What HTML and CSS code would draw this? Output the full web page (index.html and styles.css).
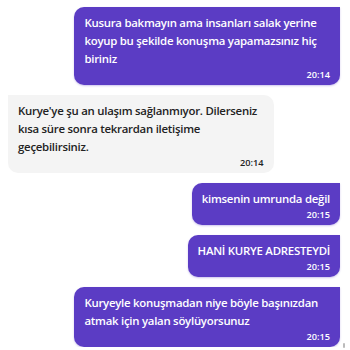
FILE: index.html
```html
<!DOCTYPE html>
<html lang="tr">
<head>
    <meta charset="UTF-8">
    <meta name="viewport" content="width=device-width, initial-scale=1.0">
    <title>Sohbet</title>
    <link rel="stylesheet" href="styles.css">
</head>
<body>

    <!-- mesaj listesi -->
    <div class="chat-box">
        <div class="chat-message sent">
            <div class="text">Kusura bakmayın ama insanları salak yerine koyup bu şekilde konuşma yapamazsınız hiç biriniz</div>
            <div class="time">20:14</div>
        </div>

        <div class="chat-message received">
            <div class="text">Kurye'ye şu an ulaşım sağlanmıyor. Dilerseniz kısa süre sonra tekrardan iletişime geçebilirsiniz.</div>
            <div class="time">20:14</div>
        </div>

        <div class="chat-message sent">
            <div class="text">kimsenin umrunda değil</div>
            <div class="time">20:15</div>
        </div>

        <div class="chat-message sent">
            <div class="text">HANİ KURYE ADRESTEYDİ</div>
            <div class="time">20:15</div>
        </div>

        <div class="chat-message sent">
            <div class="text">Kuryeyle konuşmadan niye böyle başınızdan atmak için yalan söylüyorsunuz</div>
            <div class="time">20:15</div>
        </div>
    </div>

    <div class="scroll-mark"></div>

</body>
</html>
```

FILE: styles.css
```css
body {
    font-family: "Open Sans", "Noto Sans", sans-serif;
    background: #fff;
    margin: 0;
    overflow: hidden;
}

.chat-box {
    display: flex;
    flex-direction: column;
    padding: 7px 10px 0 8px;
    gap: 10px;
}

.chat-message {
    max-width: 80%;
    padding: 7px 10px 4px 10px;
    border-radius: 10px;
    box-sizing: border-box;
}

.chat-message .text {
    font-size: 11.4px;
    font-weight: 600;
    letter-spacing: -0.25px;
    line-height: 18px;
}

.chat-message .time {
    font-size: 9.2px;
    font-weight: 600;
    text-align: right;
    line-height: 13px;
}

.sent {
    align-self: flex-end;
    background: #5b3cc4;
    color: #fff;
    border-top-right-radius: 0;
    box-shadow: 0 1px 2px rgba(91, 60, 196, 0.3);
}

.received {
    align-self: flex-start;
    background: #f4f4f4;
    color: #222;
    border-top-left-radius: 0;
}

.scroll-mark {
    position: absolute;
    right: 5px;
    bottom: 2px;
    width: 2px;
    height: 5px;
    background: #bbb;
    border-radius: 1px;
}
```
